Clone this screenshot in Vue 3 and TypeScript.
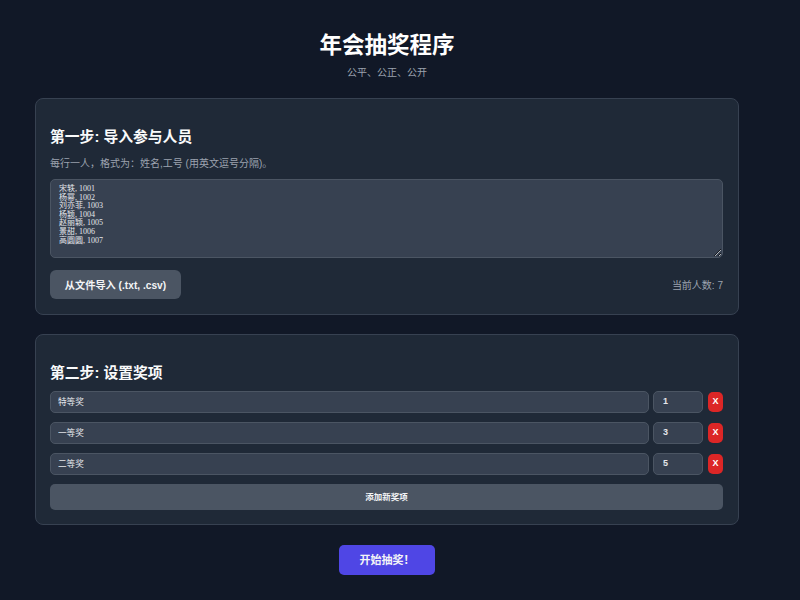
<script setup lang="ts">
import { ref } from 'vue'

interface Prize { name: string; count: number }

const people = ref('宋轶, 1001\n杨幂, 1002\n刘亦菲, 1003\n杨颖, 1004\n赵丽颖, 1005\n景甜, 1006\n高圆圆, 1007')
const prizes = ref<Prize[]>([
  { name: '特等奖', count: 1 },
  { name: '一等奖', count: 3 },
  { name: '二等奖', count: 5 },
])
</script>

<template>
  <main class="page">
    <header class="head">
      <h1>年会抽奖程序</h1>
      <p>公平、公正、公开</p>
    </header>

    <section class="card first">
      <h2>第一步: 导入参与人员</h2>
      <p class="hint">每行一人，格式为：姓名,工号 (用英文逗号分隔)。</p>
      <textarea v-model="people" class="people" spellcheck="false"></textarea>
      <div class="actions">
        <button class="btn import" type="button">从文件导入 (.txt, .csv)</button>
        <span class="total">当前人数: 7</span>
      </div>
    </section>

    <section class="card second">
      <h2>第二步: 设置奖项</h2>
      <div class="rows">
        <div v-for="(p, i) in prizes" :key="i" class="row">
          <input v-model="p.name" class="field name" type="text" />
          <input v-model="p.count" class="field count" type="text" />
          <button class="del" type="button">X</button>
        </div>
      </div>
      <button class="btn add" type="button">添加新奖项</button>
    </section>

    <div class="start-wrap">
      <button class="start" type="button">开始抽奖！</button>
    </div>
  </main>
</template>

<style>
html, body { background: #111827; }
</style>

<style scoped>
.page {
  box-sizing: border-box;
  width: 774px;
  height: 600px;
  overflow: hidden;
  padding: 31px 35px 0;
  background: #111827;
  font-family: "Liberation Sans", "Noto Sans CJK SC", sans-serif;
  color: #f3f4f6;
}
.head { text-align: center; margin-bottom: 17px; }
h1 { margin: 0; font-size: 22.5px; line-height: 30px; font-weight: 700; color: #fff; }
.head p { margin: 4px 0 0; font-size: 10px; line-height: 16px; color: #9ca3af; }
.card {
  box-sizing: border-box;
  background: #1f2937;
  border: 1px solid #374151;
  border-radius: 8px;
  padding: 0 15px 0 14px;
}
.first { height: 217px; padding-top: 28px; margin-bottom: 19px; }
.second { height: 191px; padding-top: 28px; }
h2 { margin: 0; font-size: 14.8px; line-height: 20px; font-weight: 700; color: #f9fafb; }
.hint { margin: 9px 0 0; font-size: 10px; line-height: 16px; color: #9ca3af; }
.people {
  display: block;
  box-sizing: border-box;
  width: 100%;
  height: 79px;
  margin-top: 7px;
  padding: 5px 8px;
  background: #374151;
  border: 1px solid #4b5563;
  border-radius: 5px;
  color: #e5e7eb;
  font-family: "Liberation Serif", "Noto Sans CJK SC", serif;
  font-size: 8px;
  line-height: 8.6px;
  outline: none;
}
.actions { display: flex; align-items: center; justify-content: space-between; margin-top: 12px; }
.btn {
  border: 0;
  background: #4b5563;
  color: #f3f4f6;
  font-family: inherit;
  font-weight: 700;
}
.import { width: 131px; height: 29px; border-radius: 6px; font-size: 10.2px; }
.total { font-size: 10px; color: #9ca3af; }
.rows { margin-top: 8px; display: flex; flex-direction: column; gap: 9px; }
.row { display: flex; align-items: center; gap: 4px; height: 22px; }
.field {
  box-sizing: border-box;
  height: 22px;
  padding: 0 7px 3px;
  background: #374151;
  border: 1px solid #4b5563;
  border-radius: 5px;
  color: #e5e7eb;
  font-family: inherit;
  font-size: 8.6px;
  outline: none;
}
.name { flex: 1; min-width: 0; }
.count { width: 50px; padding: 0 9px 3px; font-weight: 700; font-size: 9px; }
.del {
  width: 15px;
  height: 20px;
  margin-left: 1px;
  padding: 0 0 2px;
  border: 0;
  border-radius: 5px;
  background: #dc2626;
  color: #fff;
  font-family: inherit;
  font-size: 9px;
  font-weight: 700;
}
.add { display: block; width: 100%; height: 26px; margin-top: 9px; padding: 0 0 2px; border-radius: 5px; font-size: 8.5px; }
.start-wrap { display: flex; justify-content: center; margin-top: 20px; }
.start {
  width: 96px;
  height: 30px;
  padding: 0 0 3px;
  border: 0;
  border-radius: 5px;
  background: #4f46e5;
  color: #f3f4f6;
  font-family: inherit;
  font-size: 11px;
  font-weight: 700;
}
</style>
